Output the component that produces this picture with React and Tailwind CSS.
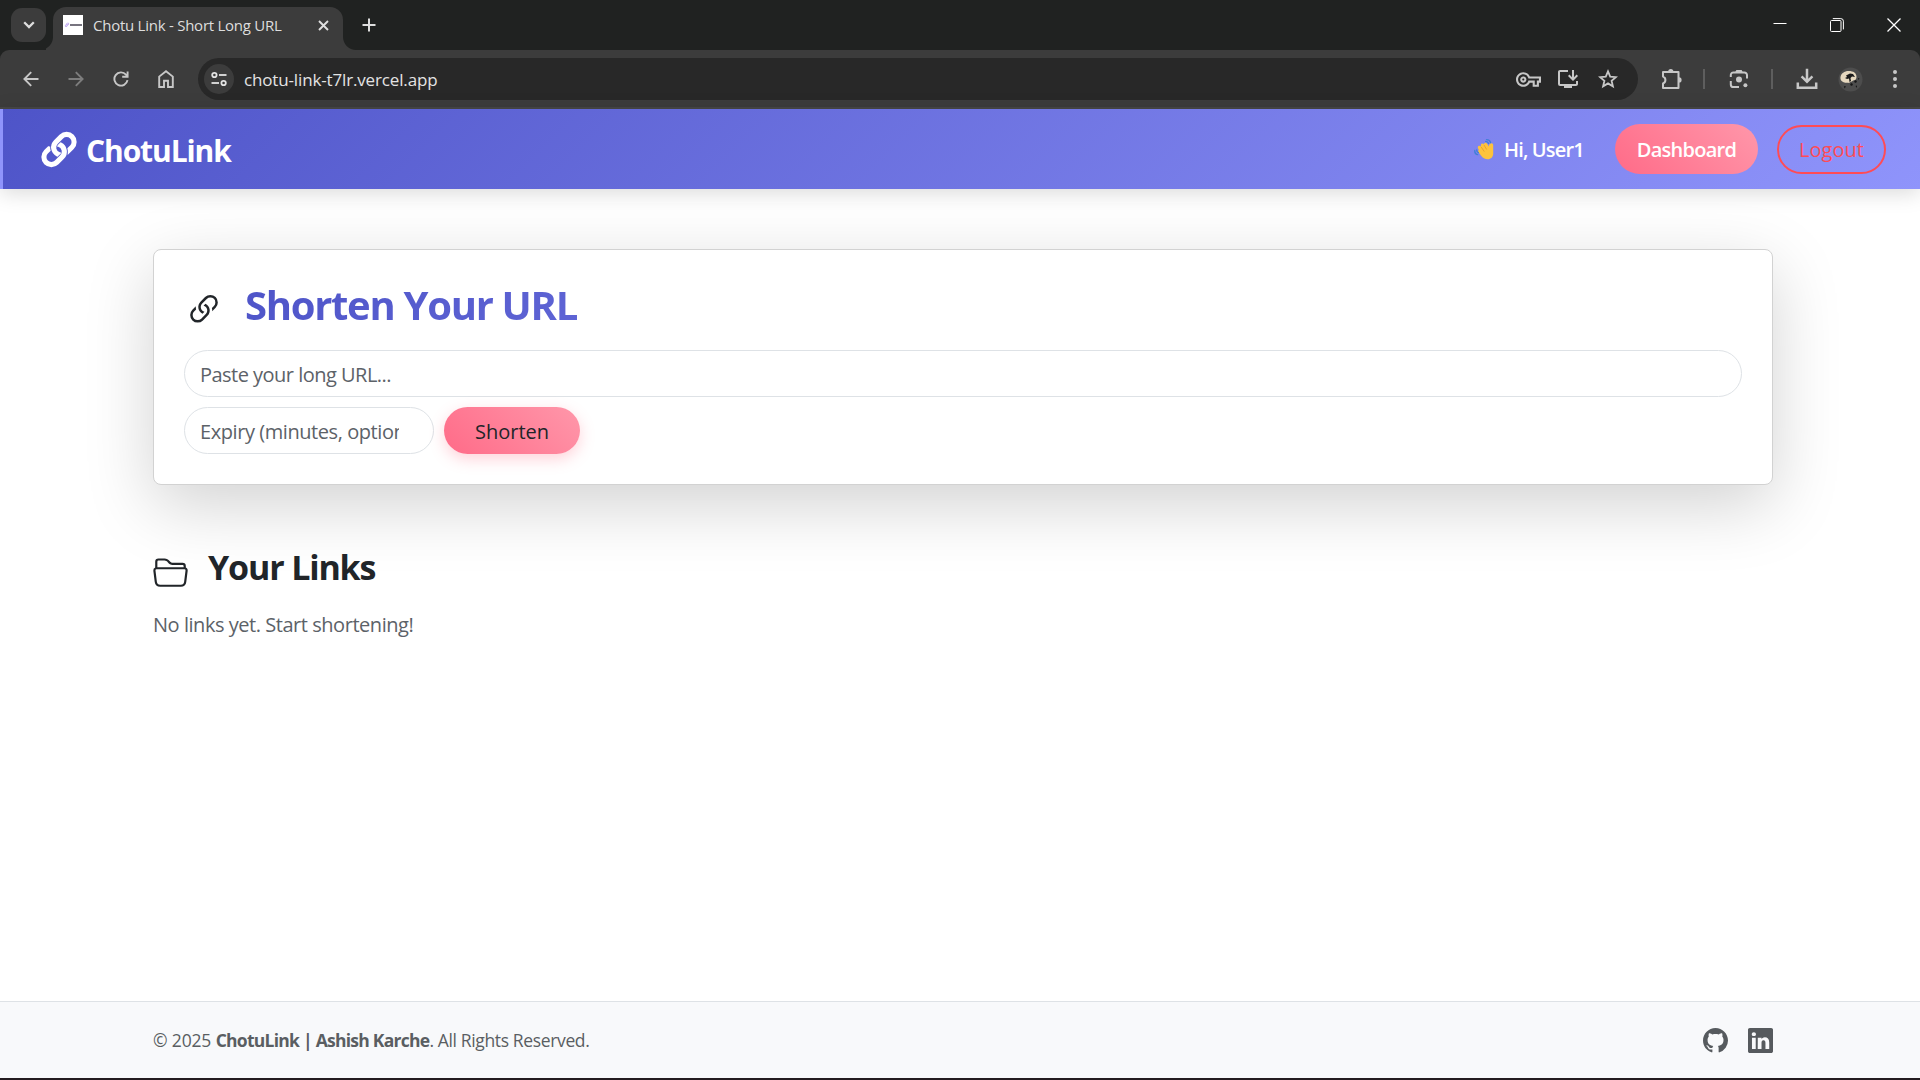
import React from "react";
import { BsFolder2Open, BsLink45Deg, BsGithub, BsLinkedin } from "react-icons/bs";
import { MdOutlineInstallDesktop, MdOutlineVpnKey } from "react-icons/md";

function Box({ className, children }) {
  return <div className={"flex h-full shrink-0 items-center justify-center " + className}>{children}</div>;
}

function TabStrip() {
  return (
    <div className="flex h-[50px] bg-[#202221] text-[#dedede]">
      <div className="mt-2 ml-[11px] flex h-[34px] w-[35px] items-center justify-center rounded-[11px] bg-[#3c3c3c]">
        <svg width="12" height="8" viewBox="0 0 12 8" fill="none" stroke="currentColor" strokeWidth="2.3">
          <path d="M1.2 1.2 6 6l4.8-4.8" />
        </svg>
      </div>
      <svg className="mt-auto" width="13" height="13" viewBox="0 0 13 13">
        <path d="M13 0v13H0c7 0 13-6 13-13z" fill="#3c3c3c" transform="translate(-6 0)" />
        <path d="M7 0h6v13H7z" fill="#3c3c3c" />
      </svg>
      <div className="-ml-[6px] mt-[7px] flex h-[43px] w-[290px] items-start rounded-t-[13px] bg-[#3c3c3c] pl-[10px]">
        <div className="mt-2 flex h-5 w-5 items-center justify-center bg-white">
          <BsLink45Deg size={6} className="text-[#7b4fe0]" />
          <span className="h-[2px] w-3 bg-[#77747f]" />
        </div>
        <span className="ml-[10px] mt-[8px] w-[215px] whitespace-pre text-[15px] leading-5 tracking-[-0.25px]">Chotu Link - Short Long URL</span>
        <svg className="mt-[13px] ml-[10px]" width="11" height="11" viewBox="0 0 11 11" stroke="currentColor" strokeWidth="1.9">
          <path d="m1 1 9 9M10 1l-9 9" />
        </svg>
      </div>
      <svg className="mt-auto" width="13" height="13" viewBox="0 0 13 13">
        <path d="M0 0v13h13C6 13 0 7 0 0z" fill="#3c3c3c" />
      </svg>
      <svg className="mt-[18px] ml-[6px]" width="14" height="14" viewBox="0 0 14 14" stroke="currentColor" strokeWidth="2">
        <path d="M7 .5v13M.5 7h13" />
      </svg>
      <div className="ml-auto mr-[19px] mt-[18px] flex gap-[43px] text-white">
        <svg width="14" height="14" viewBox="0 0 14 14" stroke="currentColor"><path d="M.5 5.5h13" /></svg>
        <svg width="14" height="14" viewBox="0 0 14 14" fill="none" stroke="currentColor">
          <rect x=".5" y="2.5" width="10.5" height="11" rx="1" />
          <path d="M2.8.6h8a2.6 2.6 0 0 1 2.6 2.6v8.2" />
        </svg>
        <svg width="14" height="14" viewBox="0 0 14 14" stroke="currentColor" strokeWidth="1.3"><path d="m.5.5 13 13M13.5.5l-13 13" /></svg>
      </div>
    </div>
  );
}

function Toolbar() {
  return (
    <div className="bg-[#202221]">
      <div className="flex h-[59px] items-start rounded-t-[9px] border-b-2 border-[#474747] bg-[#3c3c3c] pt-2 text-[#c7c7c7]">
        <div className="ml-2 flex h-[42px] shrink-0">
          <Box className="w-[45px]">
            <svg width="16" height="16" viewBox="0 0 16 16" fill="none" stroke="currentColor" strokeWidth="1.9"><path d="M15.5 8H1.6M8.2 1.2 1.4 8l6.8 6.8" /></svg>
          </Box>
          <Box className="w-[45px] text-[#7d7d7d]">
            <svg width="16" height="16" viewBox="0 0 16 16" fill="none" stroke="currentColor" strokeWidth="1.9"><path d="M.5 8h13.9M7.8 1.2 14.6 8l-6.8 6.8" /></svg>
          </Box>
          <Box className="w-[45px]">
            <svg width="16" height="16" viewBox="0 0 16 16" fill="none" stroke="currentColor" strokeWidth="1.9"><path d="M14.5 9.2A6.6 6.6 0 1 1 13 3.7l1.600 1.900M14.600.4v5.400H9.200" /></svg>
          </Box>
          <Box className="w-[45px]">
            <svg width="16" height="18" viewBox="0 0 16 18" fill="none" stroke="currentColor" strokeWidth="1.9"><path d="M1.2 17V6.600L8 1.300l6.800 5.300V17H10v-6.300H6V17z" /></svg>
          </Box>
        </div>
        <div className="ml-[10px] flex h-[42px] w-[1440px] shrink-0 items-center rounded-full bg-[#282828] pl-[6px] pr-[10px]">
          <div className="flex h-[30px] w-[30px] items-center justify-center rounded-full bg-[#3c3c3c] text-[#e3e3e3]">
            <svg width="16" height="16" viewBox="0 0 16 16" fill="none" stroke="currentColor" strokeWidth="1.8">
              <circle cx="3.4" cy="4" r="2.2" /><path d="M8 4h7.5" />
              <circle cx="12.6" cy="12" r="2.2" /><path d="M.5 12H8" />
            </svg>
          </div>
          <span className="ml-[10px] mt-px text-[17px] tracking-[-0.15px] text-[#e3e3e3]">chotu-link-t7lr.vercel.app</span>
          <div className="ml-auto flex h-full">
            <Box className="w-10"><MdOutlineVpnKey size={25} /></Box>
            <Box className="w-10"><MdOutlineInstallDesktop size={24} /></Box>
            <Box className="w-10">
              <svg width="20" height="20" viewBox="0 0 20 20" fill="none" stroke="currentColor" strokeWidth="1.8"><path d="m10 2.4 2.2 5.2 5.7.5-4.3 3.7 1.3 5.5-4.9-2.9-4.9 2.9 1.3-5.5-4.3-3.7 5.7-.5z" /></svg>
            </Box>
          </div>
        </div>
        <div className="ml-[11px] flex h-[42px]">
          <Box className="w-[45px]">
            <svg width="22" height="22" viewBox="0 0 22 22" fill="none" stroke="currentColor" strokeWidth="2">
              <path d="M2 4h15.5v16H2v-4.6a3.6 3.6 0 0 0 0-6.8z" strokeLinejoin="round" />
              <path d="M7.2 3.5a2.6 2.6 0 0 1 5.2 0M18 9.3a2.6 2.6 0 0 1 0 5.2" fill="currentColor" stroke="none" />
            </svg>
          </Box>
          <Box className="w-[20px]"><span className="h-5 w-[2px] bg-[#5e5e5e]" /></Box>
          <Box className="w-[49px]">
            <svg width="20" height="20" viewBox="0 0 20 20" fill="none" stroke="currentColor" strokeWidth="2">
              <path d="M1.8 8V6a2.6 2.6 0 0 1 2.6-2.6h11A2.6 2.6 0 0 1 18 6v3.5M1.8 12v3.4A2.6 2.6 0 0 0 4.4 18H10" />
              <path d="M6 3.4 7.4 1h5.2L14 3.4z" fill="currentColor" stroke="none" />
              <circle cx="10" cy="10.4" r="3" fill="currentColor" stroke="none" />
              <circle cx="16.4" cy="16.2" r="2" fill="currentColor" stroke="none" />
            </svg>
          </Box>
          <Box className="w-[18px]"><span className="h-5 w-[2px] bg-[#5e5e5e]" /></Box>
          <Box className="w-[51px]">
            <svg width="22" height="22" viewBox="0 0 22 22" fill="none" stroke="currentColor" strokeWidth="2.5">
              <path d="M11 .8v12.6M5.6 8.4l5.4 5.4 5.4-5.4M1.8 14.6v5.2h18.4v-5.2" />
            </svg>
          </Box>
          <Box className="w-[37px]">
            <svg width="25" height="25" viewBox="0 0 25 25">
              <circle cx="12.5" cy="12.5" r="12" fill="#4d4d4d" />
              <path d="M2.500 10c.5-3.500 4-6 8-6 5 0 8 2 8 6 0 2.500-1.500 3.500-3.500 3.500-1 1.500-3 1-4 2.500-1.500-1-3 .5-4.500-.5C4 15 2 13 2.500 10z" fill="#e6d8bf" />
              <path d="M8 8.500l4-2 3 .5 2 3-3-.5-1.500 1.500.5 3-1.500 1-.5-3.500-2 .5-2-1 2-1z" fill="#1b1b1b" />
              <path d="M17 13l2 1-1 2-2-1zM13 16l2 1-1 2-2-1zM6 19l2 .5-1.500 2zM17.500 19l1.500-.5v2.500zM20 11l1.500.5-1 1.500z" fill="#161616" />
            </svg>
          </Box>
          <Box className="w-[52px]">
            <svg width="4" height="20" viewBox="0 0 4 20" fill="currentColor"><circle cx="2" cy="3" r="2" /><circle cx="2" cy="10" r="2" /><circle cx="2" cy="17" r="2" /></svg>
          </Box>
        </div>
      </div>
    </div>
  );
}

function Wave() {
  return (
    <svg width="21" height="22" viewBox="0 0 21 22" fill="none">
      <path d="M4.300 8.200c.6-.8 1.500-.6 2.100 0L7 8.600c-.4-1.500-.1-2.700.9-3 .9-.3 1.600.1 2 .8.100-1.200.9-1.700 1.800-1.600.8.1 1.400.6 1.800 1.400l1.300 2.200c.3-1.500.4-2.700 2-3 1.500-.2 2.400.7 2.400 2v8c0 3.400-2.200 5.800-5.500 5.800-2.900 0-4.900-1.300-6.500-3.500L4.600 14.200c-.6-.9-.5-1.800.2-2.300L4 10.200c-.3-.8-.3-1.500.3-2z" fill="#fdc33c" />
      <path d="m7.200 9 3.100 4.600M10 7l2.700 4.500" stroke="#e39a2b" strokeWidth=".8" />
      <path d="M12.500 1.600c2.200 0 3.700 1.200 4.100 3M11.600 3.300c1.600.1 2.600.8 3 2.200M.8 12.500c-.2 2.400.9 3.900 2.900 4.100M2.700 12c0 1.500.5 2.300 1.700 2.600" stroke="#3f7fd6" strokeWidth="1.300" strokeLinecap="round" />
    </svg>
  );
}

function Navbar() {
  return (
    <header className="relative flex h-20 items-center bg-[linear-gradient(135deg,#4e54c8,#8f94fb)] shadow-[0_4px_20px_rgba(0,0,0,0.15)]">
      <div className="h-full w-[3px] bg-[#8f94fb]" />
      <BsLink45Deg size={48} stroke="currentColor" strokeWidth={0.7} className="mt-[3px] ml-[32px] text-white" />
      <span className="ml-[3px] mt-[3px] text-[30px] font-bold leading-10 tracking-[-1.1px] text-white">ChotuLink</span>
      <div className="ml-auto mr-[34px] flex items-center text-xl font-semibold">
        <Wave />
        <span className="mt-[2px] ml-[9px] w-[111px] tracking-[-0.85px] text-white">Hi, User1</span>
        <button className="flex h-[50px] w-[143px] items-center justify-center rounded-full bg-[linear-gradient(45deg,#ff6b88,#ff97aa)] pt-[2px] tracking-[-0.75px] text-white">Dashboard</button>
        <button className="ml-[19px] mt-px flex h-[49px] w-[109px] items-center justify-center rounded-full border-2 border-[#ff4b55] pt-px font-medium text-[#ff4b55]">Logout</button>
      </div>
    </header>
  );
}

export default function App() {
  return (
    <div className="flex h-[1080px] w-[1920px] flex-col overflow-hidden bg-white font-['Open_Sans','Noto_Sans',sans-serif] text-[#212529]">
      <TabStrip />
      <Toolbar />
      <Navbar />
      <main className="ml-[153px] w-[1620px] flex-1 pt-[60px]">
        <section className="h-[236px] rounded-[8px] border border-[#d2d2d2] bg-white px-[30px] pt-[30px] shadow-[0_20px_68px_rgba(0,0,0,0.18)]">
          <div className="flex h-[51px] items-start">
            <BsLink45Deg size={40} className="mt-[10px]" />
            <h1 className="-mt-px ml-[21px] w-[1480px] bg-[linear-gradient(135deg,#4e54c8,#8f94fb)] bg-clip-text text-[40px] leading-[51px] font-bold tracking-[-1.3px] text-transparent">Shorten Your URL</h1>
          </div>
          <div className="mt-[19px] flex h-[47px] w-[1558px] items-center rounded-full border border-[#dee2e6] px-[15px] pt-[2px] text-xl tracking-[-0.52px] text-[#5c6268]">Paste your long URL...</div>
          <div className="mt-[10px] flex gap-[10px] text-xl">
            <div className="flex h-[47px] w-[250px] items-center rounded-full border border-[#dee2e6] px-[15px] pt-[2px] tracking-[-0.43px] text-[#5c6268]">
              <span className="w-[199px] overflow-hidden whitespace-nowrap">Expiry (minutes, optional)</span>
            </div>
            <button className="flex h-[47px] w-[136px] items-center justify-center rounded-full bg-[linear-gradient(45deg,#ff6b88,#ff97aa)] pt-[2px] text-[#212529] shadow-[0_5px_15px_rgba(255,107,129,0.3)]">Shorten</button>
          </div>
        </section>
        <div className="mt-[61px] flex h-[49px] items-start">
          <BsFolder2Open size={35} className="mt-[8px]" />
          <h2 className="ml-[20px] text-[34px] leading-[42px] font-bold tracking-[-1.15px]">Your Links</h2>
        </div>
        <p className="mt-[15px] text-xl leading-[30px] tracking-[-0.46px] text-[#5c6268]">No links yet. Start shortening!</p>
      </main>
      <footer className="flex h-[77px] items-center justify-between border-t border-[#dee2e6] bg-[#f8f9fb] pt-px pr-[147px] pl-[153px] text-[17.5px] text-[#5a5e62]">
        <p className="whitespace-pre">
          <span className="tracking-[-0.15px]">© 2025 </span>
          <b className="tracking-[-0.74px]">ChotuLink | Ashish Karche</b>
          <span className="tracking-[-0.36px]">. All Rights Reserved.</span>
        </p>
        <div className="flex gap-5 text-[#565a5e]">
          <BsGithub size={25} />
          <BsLinkedin size={25} />
        </div>
      </footer>
      <div className="h-[2px] bg-[#231c20]" />
    </div>
  );
}
